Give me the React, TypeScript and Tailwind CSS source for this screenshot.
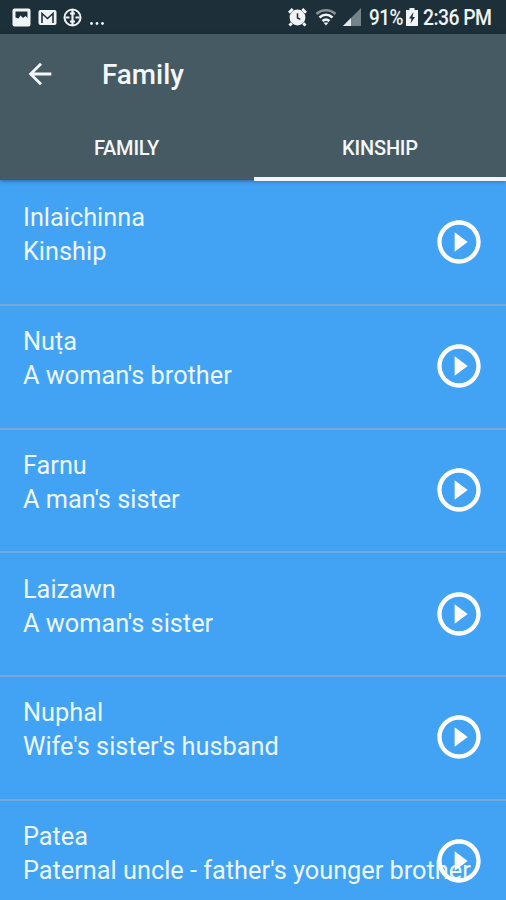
import React from "react";

const entries = [
  { word: "Inlaichinna", meaning: "Kinship" },
  { word: "Nuṭa", meaning: "A woman's brother" },
  { word: "Farnu", meaning: "A man's sister" },
  { word: "Laizawn", meaning: "A woman's sister" },
  { word: "Nuphal", meaning: "Wife's sister's husband" },
  { word: "Patea", meaning: "Paternal uncle - father's younger brother" },
];

export default function App() {
  return (
    <div className="flex h-[900px] w-[506px] flex-col overflow-hidden bg-[#42a3f5] font-['Roboto',sans-serif]">
      <StatusBar />
      <header className="relative z-10 h-[146px] shrink-0 bg-[#465a63] text-[#f4f7fa] shadow-[0_1px_4px_rgba(0,0,0,0.4)]">
        <div className="flex h-20 items-center pl-[23px]">
          <button aria-label="Back">
            <svg viewBox="0 0 24 24" className="block size-[34px] fill-current">
              <path d="M20 11H7.83l5.59-5.59L12 4l-8 8 8 8 1.41-1.41L7.83 13H20v-2z" />
            </svg>
          </button>
          <h1 className="ml-[45px] pt-0.5 text-[27.8px] leading-8 font-medium">Family</h1>
        </div>
        <nav className="grid h-[66px] grid-cols-2 text-xl font-medium">
          <Tab label="FAMILY" />
          <Tab label="KINSHIP" active />
        </nav>
      </header>
      <ul className="shrink-0 pt-0.5">
        {entries.map((entry) => (
          <EntryRow key={entry.word} {...entry} />
        ))}
      </ul>
    </div>
  );
}

function Tab({ label, active = false }: { label: string; active?: boolean }) {
  return (
    <button
      className={`-mb-px flex items-center justify-center ${
        active ? "ml-px border-b-4 border-[#f3f5fb]" : "pb-1"
      }`}
    >
      <span className="pt-1 tracking-[-0.2px]">{label}</span>
    </button>
  );
}

function EntryRow({ word, meaning }: { word: string; meaning: string }) {
  return (
    <li className="relative h-[123.8px] border-b-2 border-[#78a8d8] pt-[19.200px] pl-[23px] text-[25.3px] leading-[34px] text-[#edf7ff]">
      <p>{word}</p>
      <p className="whitespace-nowrap">{meaning}</p>
      <button aria-label={`Play ${word}`} className="absolute top-[34.200px] right-[21px] text-white">
        <svg viewBox="0 0 24 24" className="block size-[52px] fill-current">
          <path d="M10 16.5l6-4.5-6-4.5v9zM12 2C6.48 2 2 6.48 2 12s4.48 10 10 10 10-4.48 10-10S17.52 2 12 2zm0 18c-4.41 0-8-3.59-8-8s3.59-8 8-8 8 3.59 8 8-3.59 8-8 8z" />
        </svg>
      </button>
    </li>
  );
}

function StatusBar() {
  return (
    <div className="flex h-[34px] shrink-0 items-center justify-between bg-[#1d303a] pr-3.5 pl-3 text-[#f1f4f7]">
      <div className="flex items-center gap-[7px]">
        {/* screenshot saved */}
        <svg viewBox="0 0 19 19" className="size-[19px]">
          <rect x="0.5" y="0.5" width="18" height="18" rx="2" fill="currentColor" />
          <path d="M3.5 3.5h12v6.500l-2-2-2.500 2-2.500-2.500-2 3-3-1z" fill="#1d303a" />
        </svg>
        <svg viewBox="0 0 19 19" className="size-[19px]">
          <rect x="0.5" y="2" width="18" height="15" rx="2" fill="currentColor" />
          <path d="M4 15V5.500l5.500 5 5.500-5V15" fill="none" stroke="#1d303a" strokeWidth="1.600" />
        </svg>
        <svg viewBox="0 0 19 19" className="-ml-px size-[19px]" fill="none" stroke="currentColor">
          <circle cx="9.500" cy="9.500" r="8" strokeWidth="2" />
          <path d="M9.500 2v15M2.500 9.500h4M12.500 9.500h4" strokeWidth="2.200" />
          <path d="M7 5.500h5M7 13.500h5" strokeWidth="1.800" />
        </svg>
        <svg viewBox="0 0 16 19" className="h-[19px] w-4 fill-current">
          <circle cx="2.500" cy="15.500" r="1.400" />
          <circle cx="8" cy="15.500" r="1.400" />
          <circle cx="13.500" cy="15.500" r="1.400" />
        </svg>
      </div>
      <div className="flex items-center text-[22px] leading-none font-medium tracking-[-0.6px] whitespace-nowrap">
        {/* alarm */}
        <svg viewBox="0 0 20 20" className="mr-2 size-[19px]">
          <path d="M1 5l4-4M19 5l-4-4M4 16l-2.500 2.500M16 16l2.500 2.500" stroke="currentColor" strokeWidth="3" />
          <circle cx="10" cy="10" r="8.300" fill="currentColor" />
          <path d="M10 5.500v5l3 1.500" stroke="#1d303a" strokeWidth="1.600" fill="none" />
        </svg>
        {/* wifi */}
        <svg viewBox="0 0 22 18" className="mr-1.5 h-[18px] w-[22px]" fill="none" stroke="currentColor" strokeWidth="2.600">
          <path d="M1.500 6c5.500-5 13.500-5 19 0" opacity="0.5" />
          <path d="M4.500 9.500c4-3.500 9-3.500 13 0" />
          <path d="M7.500 13c2.200-1.800 4.800-1.800 7 0" />
          <path d="M8.500 14.500h5L11 17.500z" fill="currentColor" stroke="none" />
        </svg>
        {/* signal strength */}
        <svg viewBox="0 0 18 18" className="mr-2 size-[18px]">
          <path d="M0 18L18 0v18z" fill="#74828a" />
          <path d="M0 18l8-8v8z" fill="#e4e8ea" />
        </svg>
        <span className="w-[34px] pt-0.5">
          <span className="inline-block origin-left scale-x-[0.860]">91%</span>
        </span>
        <svg viewBox="0 0 12 18" className="mr-[5px] ml-[3px] h-[18px] w-3">
          <path d="M3.500 0h5v2H12v16H0V2h3.500z" fill="currentColor" />
          <path d="M7.500 4L3 10.500h2.500L4.500 15.500 9 9H6.500z" fill="#1d303a" />
        </svg>
        <span className="w-[69px] pt-0.5">
          <span className="inline-block origin-left scale-x-[0.880]">2:36 PM</span>
        </span>
      </div>
    </div>
  );
}
